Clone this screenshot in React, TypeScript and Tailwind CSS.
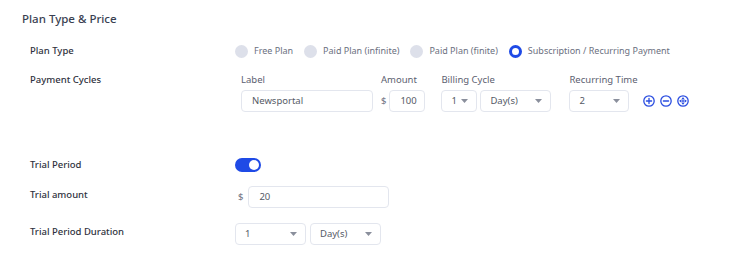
import React, { useState } from 'react';

const planTypes = ['Free Plan', 'Paid Plan (infinite)', 'Paid Plan (finite)', 'Subscription / Recurring Payment'];

function Caret() {
  return (
    <svg width="7" height="4" viewBox="0 0 7 4" className="shrink-0">
      <path d="M0 0h7L3.5 4z" fill="#8a8f9c" />
    </svg>
  );
}

function Select({ value, className }: { value: string; className: string }) {
  return (
    <div className={`h-[22px] border border-[#e3e6ee] rounded-[4px] bg-white flex items-center justify-between pl-[9px] pr-[8px] text-[9.5px] text-[#555a66] ${className}`}>
      <span>{value}</span>
      <Caret />
    </div>
  );
}

function Input({ value, className }: { value: string; className: string }) {
  return (
    <div className={`h-[22px] border border-[#e3e6ee] rounded-[4px] bg-white flex items-center pl-[10px] text-[9.5px] text-[#555a66] ${className}`}>
      {value}
    </div>
  );
}

function CircleIcon({ kind }: { kind: 'plus' | 'minus' | 'move' }) {
  return (
    <svg width="12" height="12" viewBox="0 0 12 12" fill="none" stroke="#2a4de0" strokeWidth="1.3" strokeLinecap="round">
      <circle cx="6" cy="6" r="5.2" />
      {kind !== 'move' && <path d="M3.4 6h5.2" />}
      {kind === 'plus' && <path d="M6 3.4v5.2" />}
      {kind === 'move' && (
        <>
          <path d="M3 6h6M6 3v6" strokeWidth="1" />
          <path d="M5 3.9L6 2.9l1 1M5 8.1l1 1 1-1M3.9 5L2.9 6l1 1M8.1 5l1 1-1 1" strokeWidth="1" />
        </>
      )}
    </svg>
  );
}

function Label({ children }: { children: React.ReactNode }) {
  return <div className="w-[235px] shrink-0 pl-[30px] text-[9.5px] leading-[12px] font-medium text-[#2f3240]">{children}</div>;
}

export default function App() {
  const [plan, setPlan] = useState(3);
  const [trial, setTrial] = useState(true);

  return (
    <div className="w-[730px] h-[265px] bg-white overflow-hidden" style={{ fontFamily: '"Noto Sans", Inter, sans-serif' }}>
      <div className="pt-[11px] pl-[22px] text-[11.5px] leading-[16px] font-medium text-[#3a3f52]">Plan Type &amp; Price</div>

      <div className="flex items-center mt-[16px] h-[16px]">
        <Label>Plan Type</Label>
        <div className="flex items-center text-[9px] text-[#6b7080]">
          {planTypes.map((p, i) => (
            <button key={p} onClick={() => setPlan(i)} className="flex items-center mr-[11px]">
              {plan === i ? (
                <span className="w-[13px] h-[13px] rounded-full border-[3px] border-[#1f4ae6] bg-white" />
              ) : (
                <span className="w-[13px] h-[13px] rounded-full bg-[#dde0ea]" />
              )}
              <span className="ml-[6px]">{p}</span>
            </button>
          ))}
        </div>
      </div>

      <div className="flex mt-[15px]">
        <Label>Payment Cycles</Label>
        <div className="flex items-end pl-[6px]">
          <div className="flex flex-col">
            <span className="text-[9.5px] leading-[12px] text-[#5b6070] mb-[4px]">Label</span>
            <Input value="Newsportal" className="w-[132px]" />
          </div>
          <div className="flex flex-col ml-[8px]">
            <span className="text-[9.5px] leading-[12px] text-[#5b6070] mb-[4px]">Amount</span>
            <div className="flex items-center">
              <span className="text-[9.5px] text-[#6b7080] mr-[3px]">$</span>
              <Input value="100" className="w-[36px]" />
            </div>
          </div>
          <div className="flex flex-col ml-[16px]">
            <span className="text-[9.5px] leading-[12px] text-[#5b6070] mb-[4px]">Billing Cycle</span>
            <div className="flex gap-[3px]">
              <Select value="1" className="w-[36px]" />
              <Select value="Day(s)" className="w-[71px]" />
            </div>
          </div>
          <div className="flex flex-col w-[60px] ml-[18px]">
            <span className="text-[9.5px] leading-[12px] text-[#5b6070] mb-[4px] whitespace-nowrap">Recurring Time</span>
            <Select value="2" className="w-[60px]" />
          </div>
          <div className="flex items-center gap-[5px] ml-[14px] h-[22px]">
            <CircleIcon kind="plus" />
            <CircleIcon kind="minus" />
            <CircleIcon kind="move" />
          </div>
        </div>
      </div>

      <div className="flex items-center mt-[46px] h-[14px]">
        <Label>Trial Period</Label>
        <button
          onClick={() => setTrial(!trial)}
          className={`w-[26px] h-[14px] rounded-full flex items-center px-[2px] ${trial ? 'bg-[#1f4ae6] justify-end' : 'bg-[#dde0ea] justify-start'}`}
        >
          <span className="w-[10px] h-[10px] rounded-full bg-white" />
        </button>
      </div>

      <div className="flex mt-[14px]">
        <Label>
          <div className="pt-[3px]">Trial amount</div>
        </Label>
        <div className="flex items-center">
          <span className="text-[9.5px] text-[#6b7080] ml-[3px] mr-[5px]">$</span>
          <Input value="20" className="w-[141px]" />
        </div>
      </div>

      <div className="flex mt-[15px]">
        <Label>
          <div className="pt-[3px]">Trial Period Duration</div>
        </Label>
        <div className="flex gap-[4px]">
          <Select value="1" className="w-[71px]" />
          <Select value="Day(s)" className="w-[71px]" />
        </div>
      </div>
    </div>
  );
}
